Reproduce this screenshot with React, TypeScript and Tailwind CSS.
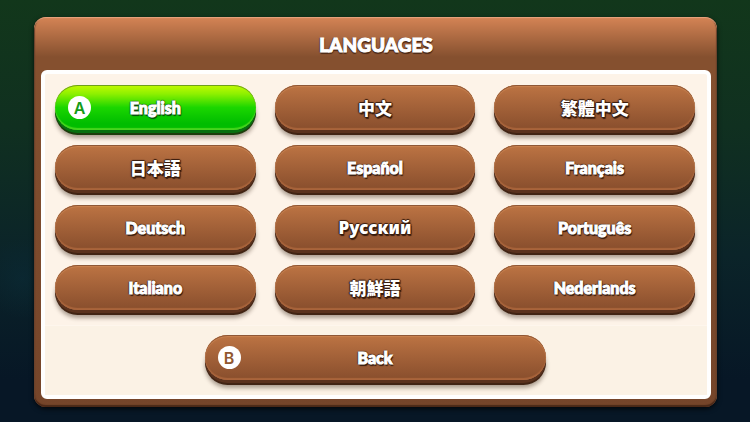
import clsx from 'clsx'

type Script = 'latin' | 'cyrillic' | 'cjk'

interface Language {
  code: string
  label: string
  script?: Script
}

const LANGUAGES: Language[] = [
  { code: 'en', label: 'English' },
  { code: 'zh-CN', label: '中文', script: 'cjk' },
  { code: 'zh-TW', label: '繁體中文', script: 'cjk' },
  { code: 'ja', label: '日本語', script: 'cjk' },
  { code: 'es', label: 'Español' },
  { code: 'fr', label: 'Français' },
  { code: 'de', label: 'Deutsch' },
  { code: 'ru', label: 'Русский', script: 'cyrillic' },
  { code: 'pt', label: 'Português' },
  { code: 'it', label: 'Italiano' },
  { code: 'ko', label: '朝鮮語', script: 'cjk' },
  { code: 'nl', label: 'Nederlands' },
]

const SCRIPT_CLASSES: Record<Script, string> = {
  latin: 'text-base leading-5 font-black [-webkit-text-stroke:1px_white]',
  cyrillic: "text-[17px] leading-5 font-black font-['Noto_Sans',sans-serif]",
  cjk: "text-[17px] leading-5 font-black font-['Noto_Sans_CJK_JP',sans-serif]",
}

interface MenuButtonProps {
  label: string
  lang?: string
  script?: Script
  hint?: 'A' | 'B'
  active?: boolean
  className?: string
}

// Pill with a thick lower edge and an optional gamepad hint
function MenuButton({
  label,
  lang,
  script = 'latin',
  hint,
  active = false,
  className,
}: MenuButtonProps) {
  return (
    <button
      className={clsx(
        'relative flex h-[45px] w-full items-center justify-center rounded-full text-white',
        active
          ? 'bg-[linear-gradient(to_bottom,#c4fa00_0%,#8df000_20%,#1bd600_50%,#00bd00_85%)] shadow-[inset_0_1px_0_#6f9f1c,inset_0_-2px_1px_#46d51c,0_3px_0_#087010,0_5px_0_#1d3d0c,0_8px_4px_rgba(50,30,15,0.4)]'
          : 'bg-linear-to-b from-[#bd7443] to-[#884e2d] shadow-[inset_0_1px_0_#8e5736,inset_0_2px_1px_#c98250,inset_0_-2px_1px_#a9643b,0_3px_0_#5a321e,0_5px_0_#412414,0_8px_4px_rgba(50,30,15,0.4)]',
        className,
      )}
      type="button"
    >
      {hint && (
        <span
          className={clsx(
            'absolute left-[13px] flex size-[23px] items-center justify-center rounded-full bg-white font-[Inter,sans-serif] text-base leading-4 font-semibold',
            active ? 'text-[#149b16]' : 'text-[#91572f]',
          )}
        >
          {hint}
        </span>
      )}
      <span
        className={clsx(
          SCRIPT_CLASSES[script],
          active
            ? '[text-shadow:1px_0_1px_#07480c,-1px_0_1px_#07480c,0_-1px_1px_#07480c,0_1px_1px_#07480c,1px_2px_1px_#07480c]'
            : '[text-shadow:1px_0_1px_#371c0e,-1px_0_1px_#371c0e,0_-1px_1px_#371c0e,0_1px_1px_#371c0e,1px_2px_1px_#371c0e]',
        )}
        lang={lang}
      >
        {label}
      </span>
    </button>
  )
}

export default function App() {
  return (
    <main className="min-h-screen bg-[radial-gradient(circle_at_3%_66%,#0b2b3699_0,#0b2b3600_40px),linear-gradient(to_bottom,#12371b_0%,#103020_30%,#0b2429_60%,#071726_90%)] pt-[17px] pr-[33px] pb-[15px] pl-[34px] font-[Lato,'Noto_Sans','Noto_Sans_CJK_JP',sans-serif]">
      <section className="rounded-xl bg-[linear-gradient(to_bottom,#d58455_0,#85502f_40px,#85502f_53px,#75452a_100%)] pr-[6px] pb-2 pl-[7px] shadow-[inset_0_1px_1px_#e9a780,inset_0_-2px_1px_#4a2817,inset_1px_0_1px_#5c3824,inset_-1px_0_1px_#5c3824,0_2px_5px_rgba(0,0,0,0.7)]">
        <h1 className="flex h-[53px] items-center justify-center pt-1 text-[19px] font-black text-white [-webkit-text-stroke:1px_white] [text-shadow:0_2px_1px_#4b2917,1px_1px_1px_#4b2917,-1px_0_1px_#4b2917]">
          LANGUAGES
        </h1>
        <div className="rounded-md border-4 border-white bg-[#fdf3e8]">
          <div className="grid grid-cols-3 gap-x-[19px] gap-y-[15px] pt-[11px] pr-3 pb-[15px] pl-[10px]">
            {LANGUAGES.map(({ code, label, script }) => (
              <MenuButton
                key={code}
                active={code === 'en'}
                hint={code === 'en' ? 'A' : undefined}
                label={label}
                lang={code === 'ko' ? 'ja' : code}
                script={script}
              />
            ))}
          </div>
          <footer className="flex justify-center border-t border-[#fef6ed] bg-[#fbf2e5] pt-[9px] pr-3 pb-[15px] pl-[10px]">
            <MenuButton className="max-w-[341px]" hint="B" label="Back" />
          </footer>
        </div>
      </section>
    </main>
  )
}
